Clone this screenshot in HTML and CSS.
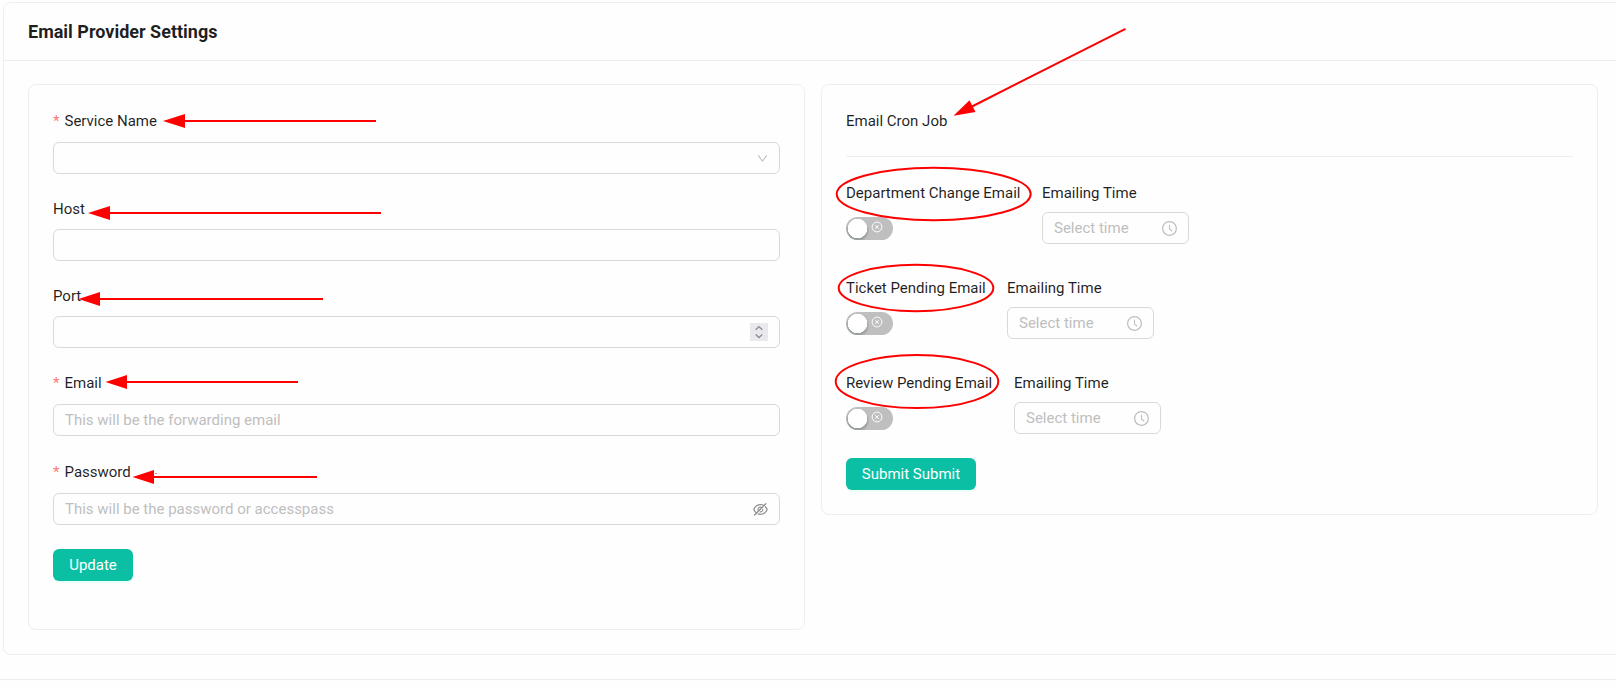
FILE: index.html
```html
<!DOCTYPE html>
<html lang="en">
<head>
<meta charset="utf-8">
<title>Email Provider Settings</title>
<link rel="stylesheet" href="styles.css">
</head>
<body>
<svg class="defs" width="0" height="0" aria-hidden="true">
  <symbol id="clock" viewBox="0 0 1024 1024"><path d="M512 64C264.6 64 64 264.6 64 512s200.6 448 448 448 448-200.6 448-448S759.4 64 512 64zm0 820c-205.4 0-372-166.6-372-372s166.6-372 372-372 372 166.6 372 372-166.6 372-372 372z"/><path d="M686.7 638.6L544.1 535.5V288c0-4.400-3.600-8-8-8H488c-4.400 0-8 3.600-8 8v275.400c0 2.600 1.200 5 3.300 6.500l165.400 120.600c3.600 2.600 8.600 1.900 11.200-1.700l28.600-39c2.600-3.700 1.800-8.700-1.800-11.200z"/></symbol>
  <symbol id="off" viewBox="0 0 12 12"><circle cx="6" cy="6" r="4.900" fill="none" stroke="currentColor" stroke-width=".95"/><path d="M4.300 4.200l3.400 3.600M7.700 4.200L4.300 7.800" fill="none" stroke="currentColor" stroke-width=".95"/></symbol>
</svg>
<main class="settings">
  <header class="settings-head"><h1>Email Provider Settings</h1></header>
  <div class="settings-body">
    <form class="panel provider">
      <div class="field">
        <label class="label tall required">Service Name</label>
        <div class="control"><svg class="chevron" viewBox="0 0 1024 1024"><path d="M884 256h-75c-5.100 0-9.900 2.500-12.900 6.600L512 654.200 227.900 262.600c-3-4.100-7.800-6.600-12.900-6.600h-75c-6.500 0-10.300 7.400-6.500 12.700l352.600 486.100c12.800 17.600 39 17.600 51.700 0l352.600-486.100c3.900-5.300.1-12.700-6.400-12.700z"/></svg></div>
      </div>
      <div class="field">
        <label class="label">Host</label>
        <div class="control"></div>
      </div>
      <div class="field">
        <label class="label">Port</label>
        <div class="control"><span class="stepper"><svg viewBox="0 0 18 18"><path d="M5.700 6.700L9 3.700l3.300 3M5.700 11.500l3.300 3 3.300-3"/></svg></span></div>
      </div>
      <div class="field">
        <label class="label mid required">Email</label>
        <div class="control"><span class="placeholder">This will be the forwarding email</span></div>
      </div>
      <div class="field">
        <label class="label tall required">Password</label>
        <div class="control"><span class="placeholder">This will be the password or accesspass</span><svg class="eye" viewBox="0 0 1024 1024"><path d="M942.200 486.200Q889.470 375.110 816.700 305l-50.880 50.880C807.310 395.530 843.450 447.400 874.700 512 791.500 684.200 673.400 766 512 766q-72.670 0-133.870-22.380L323 798.750Q408 838 512 838q288.300 0 430.200-300.300a60.290 60.290 0 000-51.500zm-63.570-320.640L836 122.880a8 8 0 00-11.320 0L715.310 232.200Q624.860 186 512 186q-288.300 0-430.200 300.300a60.300 60.300 0 000 51.500q56.690 119.400 136.500 191.410L112.480 835a8 8 0 000 11.310L155.170 889a8 8 0 0011.310 0l712.150-712.120a8 8 0 000-11.320zM149.300 512C232.600 339.800 350.700 258 512 258c54.540 0 104.130 9.360 149.120 28.390l-70.300 70.300a176 176 0 00-238.130 238.130l-83.420 83.420C223.100 637.490 183.300 582.280 149.300 512zm246.700 0a112.110 112.110 0 01146.200-106.690L401.310 546.200A112 112 0 01396 512z"/><path d="M508 624c-3.460 0-6.870-.16-10.250-.47l-52.820 52.820a176.090 176.090 0 00227.420-227.420l-52.820 52.820c.31 3.380.47 6.790.47 10.250a111.940 111.940 0 01-112 112z"/></svg></div>
      </div>
      <button type="button" class="button">Update</button>
    </form>
    <section class="panel cron">
      <h2>Email Cron Job</h2>
      <div class="jobs">
        <div class="job department">
          <div class="job-toggle"><label class="label">Department Change Email</label><span class="switch"><svg><use href="#off"/></svg></span></div>
          <div class="job-time"><label class="label">Emailing Time</label><div class="control"><span class="placeholder">Select time</span><svg class="clock"><use href="#clock"/></svg></div></div>
        </div>
        <div class="job ticket">
          <div class="job-toggle"><label class="label">Ticket Pending Email</label><span class="switch"><svg><use href="#off"/></svg></span></div>
          <div class="job-time"><label class="label">Emailing Time</label><div class="control"><span class="placeholder">Select time</span><svg class="clock"><use href="#clock"/></svg></div></div>
        </div>
        <div class="job review">
          <div class="job-toggle"><label class="label">Review Pending Email</label><span class="switch"><svg><use href="#off"/></svg></span></div>
          <div class="job-time"><label class="label">Emailing Time</label><div class="control"><span class="placeholder">Select time</span><svg class="clock"><use href="#clock"/></svg></div></div>
        </div>
      </div>
      <button type="button" class="button">Submit Submit</button>
    </section>
  </div>
</main>
<div class="footer-rule"></div>
<svg class="annotations" viewBox="0 0 1616 690" aria-hidden="true">
  <g class="lines">
    <path d="M184 121H376M109 213H381M99 299H323M126 382H298M153 477H317"/>
    <path d="M972 106.500L1125.500 28.800"/>
    <ellipse cx="933.700" cy="194" rx="97" ry="26.200"/>
    <ellipse cx="916" cy="288" rx="77.300" ry="23.200"/>
    <ellipse cx="917" cy="381.600" rx="81.300" ry="26.500"/>
  </g>
  <path d="M163 121l22-7v14zM88 213l22-7v14zM78.500 299l21.500-7v14zM105.500 382l21.500-7v14zM132.500 477l21.500-7v14zM953.500 115.700L969.500 100.300L975.500 112zM155 473h2v.5h-2z"/>
</svg>
</body>
</html>
```
FILE: styles.css
```css
* { box-sizing: border-box; }
body {
  margin: 0;
  height: 690px;
  overflow: hidden;
  position: relative;
  background: #fefefe;
  color: rgba(0, 0, 0, .88);
  font: 15px/23px Roboto, "Liberation Sans", sans-serif;
}
.defs { position: absolute; }
.settings {
  width: 1620px;
  height: 653px;
  margin: 2px 0 0 3px;
  border: 1px solid #eee;
  border-radius: 8px;
}
.settings-head {
  height: 58px;
  padding: 0 24px;
  display: flex;
  align-items: center;
  border-bottom: 1px solid #eee;
}
h1 { margin: 0; font-size: 18px; font-weight: 700; line-height: 28px; }
.settings-body {
  display: flex;
  align-items: flex-start;
  gap: 16px;
  padding: 23px 24px 24px;
}
.panel {
  width: 777px;
  padding: 24px;
  border: 1px solid #eee;
  border-radius: 8px;
}
.provider { height: 546px; }
.field { margin-bottom: 24px; }
.label { display: block; height: 23px; margin-bottom: 8px; white-space: nowrap; }
.label.mid { height: 24px; }
.label.tall { height: 25px; line-height: 24px; }
.required::before {
  content: "*";
  margin-right: 4px;
  color: #ff7875;
  display: inline-block;
  width: 7.500px;
}
.control {
  height: 32px;
  padding: 0 11px;
  display: flex;
  align-items: center;
  justify-content: space-between;
  border: 1px solid #d9d9d9;
  border-radius: 6px;
}
.placeholder { color: #bfbfbf; }
svg { display: block; fill: currentColor; }
.chevron { width: 13px; height: 13px; margin: 1px -1px 0 auto; color: #bfbfbf; }
.eye { width: 17px; height: 17px; margin-right: -1px; color: #8c8c8c; }
.clock { width: 17px; height: 17px; margin: 1px -1px 0 0; color: #bfbfbf; }
.stepper { width: 18px; height: 18px; margin-left: auto; background: #e9e9ed; }
.stepper svg { width: 18px; height: 18px; fill: none; stroke: #8f8f9d; stroke-width: 1.500; }
.button {
  height: 32px;
  display: block;
  padding: 0;
  border: 0;
  border-radius: 6px;
  background: #0abfa3;
  box-shadow: 0 2px 0 rgba(5, 255, 155, .07);
  color: #fff;
  font: inherit;
  white-space: nowrap;
}
.provider .button { width: 80px; }
.cron .button { width: 130px; }
h2 {
  height: 48px;
  margin: 0 0 24px;
  font: inherit;
  line-height: 24px;
  border-bottom: 1px solid #eee;
}
.job { display: grid; height: 63px; margin-bottom: 32px; }
.job .label { line-height: 25px; }
.job:last-child { margin-bottom: 24px; }
.department { grid-template-columns: 196px 147px; }
.ticket { grid-template-columns: 161px 147px; }
.review { grid-template-columns: 168px 147px; }
.switch {
  display: block;
  width: 47px;
  height: 23px;
  margin-top: 13px;
  padding: 4px 0 0 25px;
  border-radius: 12px;
  color: #fff;
  background: radial-gradient(circle at 11.500px 11.500px, #fff 9.500px, transparent 10px), radial-gradient(circle at 11.500px 13.500px, #999f9f 9px, #bfbfbf 12px);
}
.switch svg { width: 12px; height: 12px; }
.annotations {
  position: absolute;
  inset: 0;
  width: 1616px;
  height: 690px;
  pointer-events: none;
  color: #f00;
}
.lines { fill: none; stroke: #f00; stroke-width: 2; }
.footer-rule { margin-top: 24px; border-top: 1px solid #eee; }
```
